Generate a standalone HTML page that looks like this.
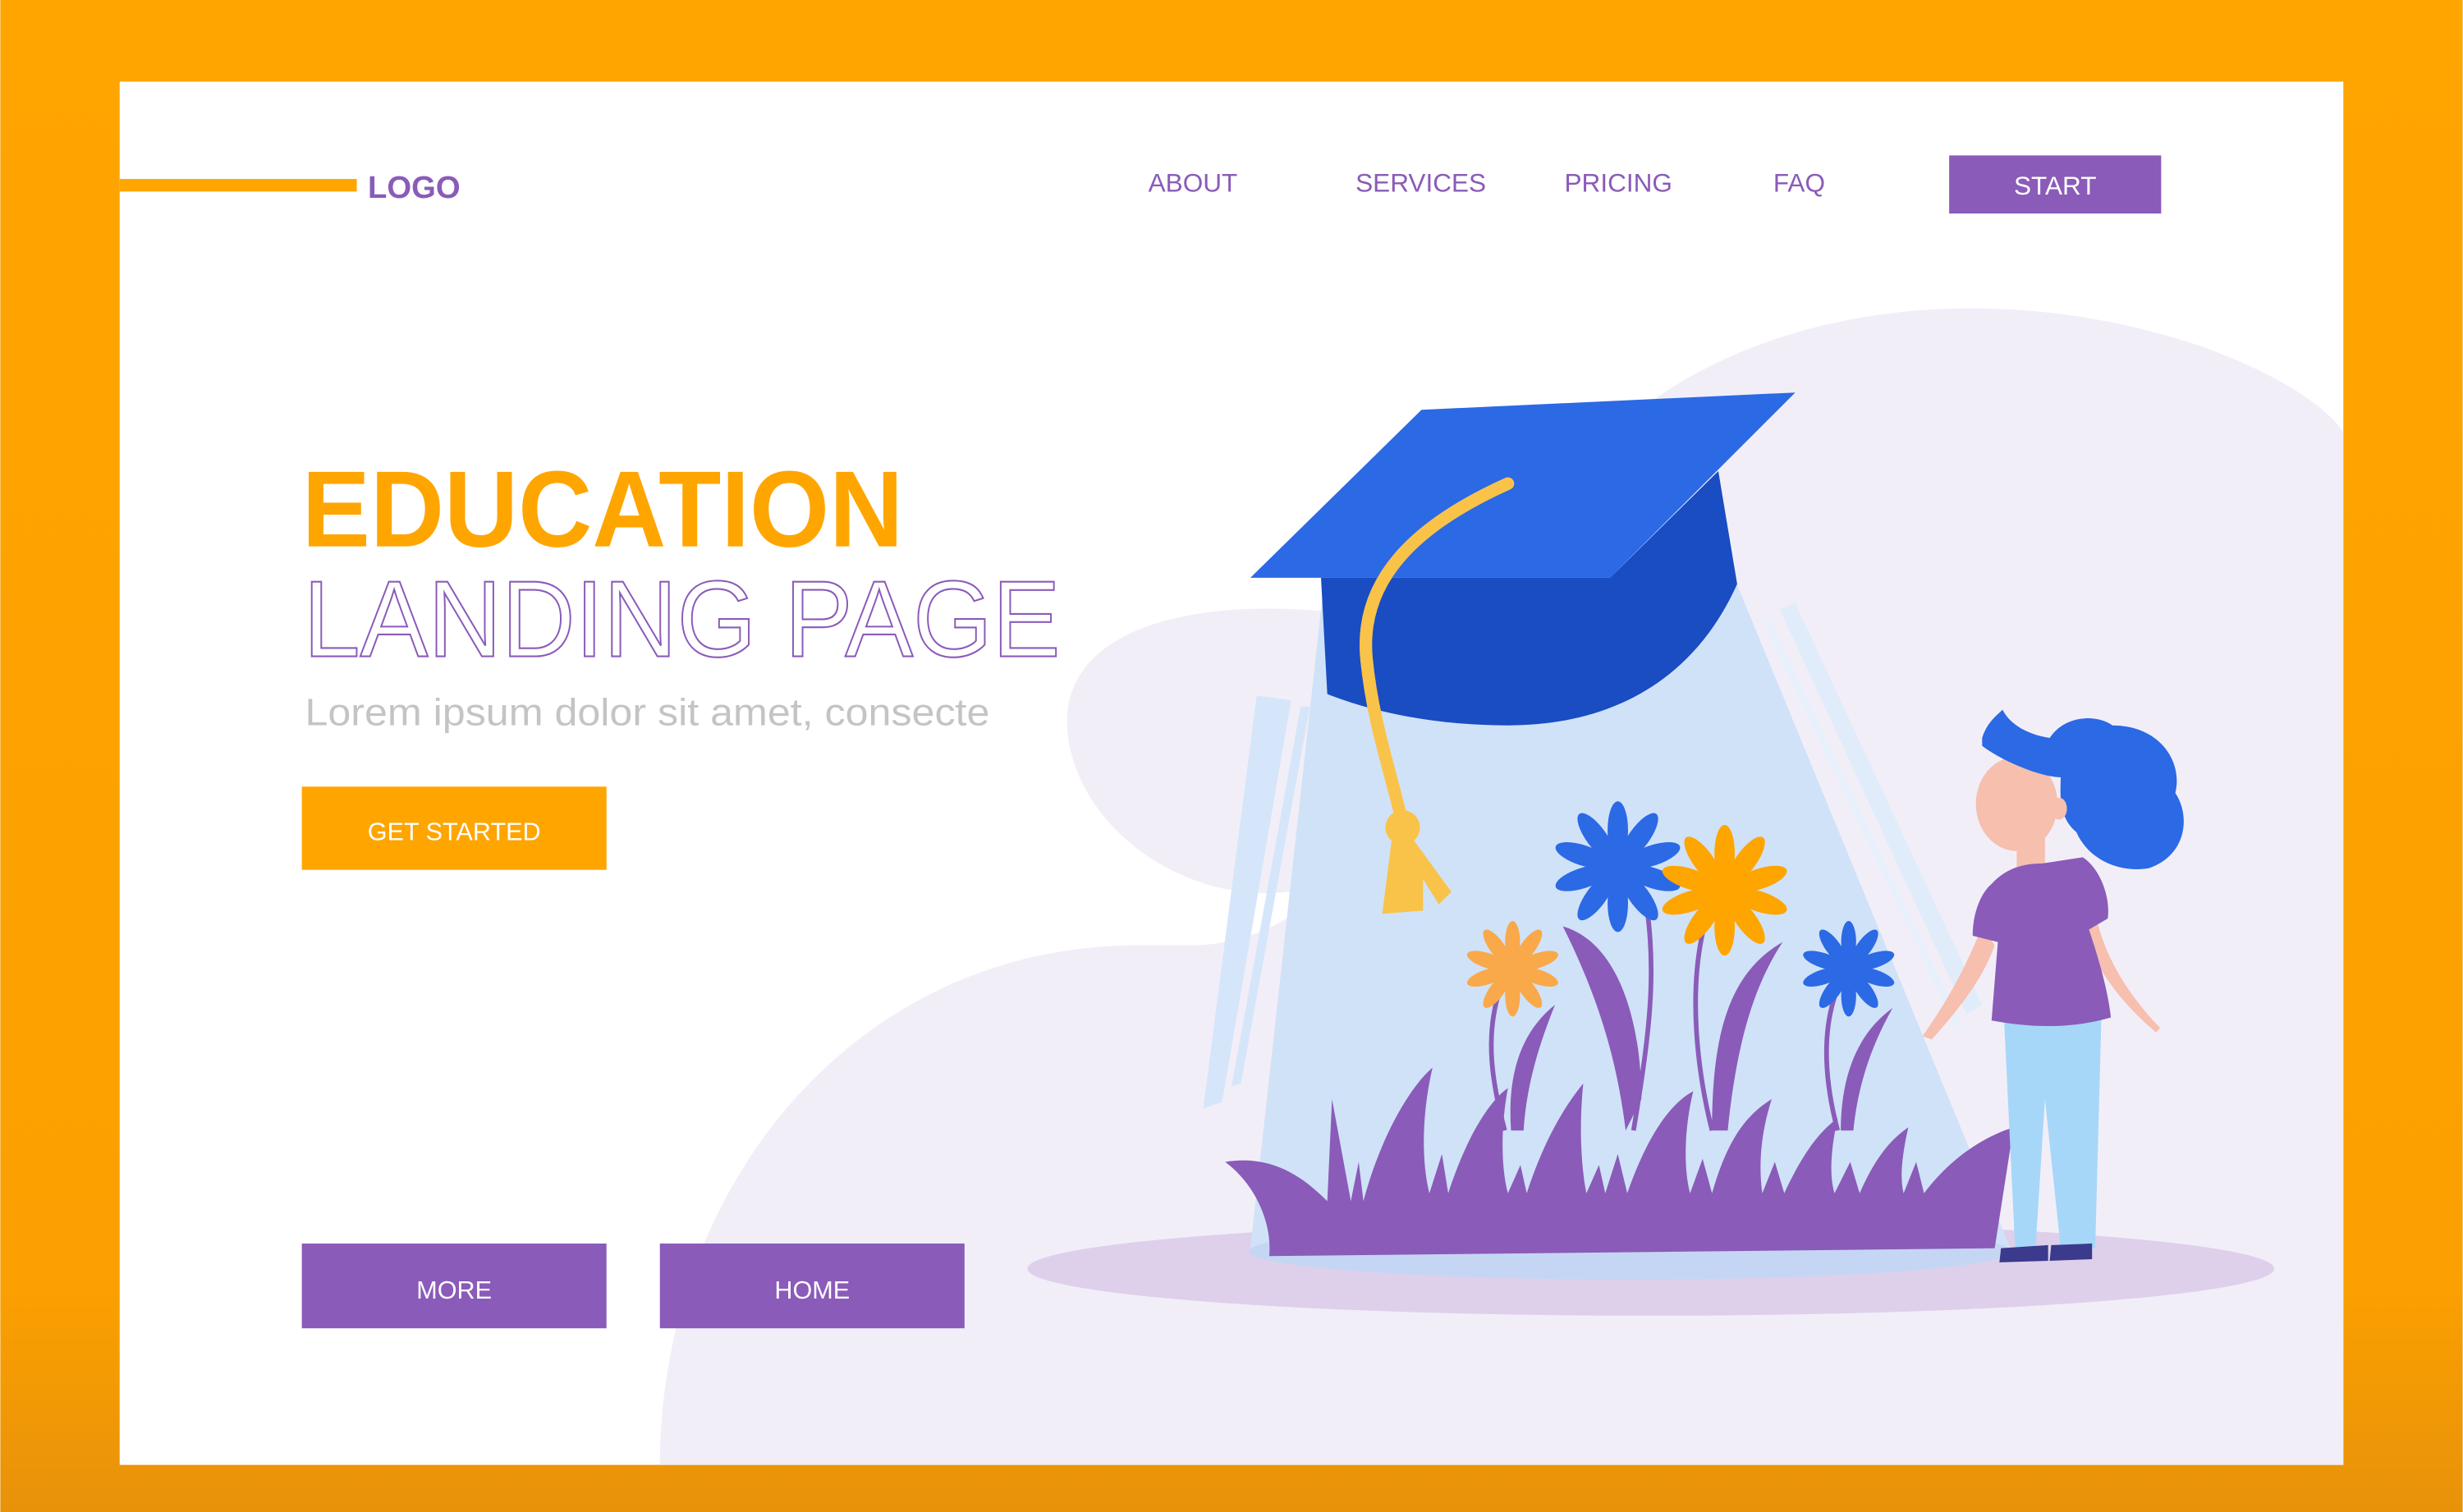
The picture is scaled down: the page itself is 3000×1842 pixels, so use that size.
<!DOCTYPE html>
<html><head><meta charset="utf-8"><style>html,body{margin:0;padding:0;width:3000px;height:1842px;overflow:hidden}svg{display:block}</style></head>
<body>
<svg width="3000" height="1842" viewBox="0 0 1568 963" xmlns="http://www.w3.org/2000/svg" font-family="Liberation Sans, sans-serif">
<defs>
<linearGradient id="bg" x1="0" y1="0" x2="0" y2="1"><stop offset="0" stop-color="#FFA500"/><stop offset="0.85" stop-color="#FBA000"/><stop offset="1" stop-color="#E8920A"/></linearGradient>
<g id="pet"><ellipse cx="0" cy="-18" rx="5" ry="14"/><ellipse cx="0" cy="-18" rx="5" ry="14" transform="rotate(36)"/><ellipse cx="0" cy="-18" rx="5" ry="14" transform="rotate(72)"/><ellipse cx="0" cy="-18" rx="5" ry="14" transform="rotate(108)"/><ellipse cx="0" cy="-18" rx="5" ry="14" transform="rotate(144)"/><ellipse cx="0" cy="-18" rx="5" ry="14" transform="rotate(180)"/><ellipse cx="0" cy="-18" rx="5" ry="14" transform="rotate(216)"/><ellipse cx="0" cy="-18" rx="5" ry="14" transform="rotate(252)"/><ellipse cx="0" cy="-18" rx="5" ry="14" transform="rotate(288)"/><ellipse cx="0" cy="-18" rx="5" ry="14" transform="rotate(324)"/><circle r="10"/></g>
</defs>
<rect width="1568" height="963" fill="url(#bg)"/>
<rect x="76" y="52" width="1416" height="881" fill="#fff"/>
<path d="M420,933 C420,760 540,605 720,602 L760,602 C880,600 920,430 1000,305 C1080,200 1250,170 1400,220 C1450,238 1480,258 1492,275 L1492,933 Z" fill="#F2EEF8"/>
<path d="M680,470 C670,400 760,380 850,390 L850,560 C780,590 690,540 680,470Z" fill="#F2EEF8"/>
<ellipse cx="1051" cy="808" rx="397" ry="30" fill="#DED0EA"/>
<polygon points="843,370 1105,370 1280,795 796,795" fill="#D0E2F8"/>
<ellipse cx="1038" cy="797" rx="243" ry="18" fill="#C5D6F4"/>
<polygon points="800,443 822,446 778,702 766,706" fill="#D6E6FA"/>
<polygon points="828,450 834,450 790,690 784,692" fill="#D6E6FA"/>
<polygon points="1133,388 1143,384 1262,640 1252,646" fill="#E1ECFA"/>
<polygon points="1122,395 1127,395 1250,655 1245,655" fill="#E8F0FB"/>
<polygon points="905,261 1143,250 1025,368 796,368" fill="#2B69E5"/>
<path d="M841,368 L1025,368 L1094,300 L1106,372 C1080,430 1030,462 960,462 C910,462 870,452 845,442 Z" fill="#1A4CC2"/>
<path d="M960,308 C900,335 865,370 870,420 C874,460 885,490 893,525" stroke="#F9C349" stroke-width="8" fill="none" stroke-linecap="round"/>
<circle cx="893" cy="527" r="11" fill="#F9C349"/>
<polygon points="886,535 900,535 924,568 916,576 906,560 906,580 880,582" fill="#F9C349"/>
<g stroke="#8A5BB9" stroke-width="3" fill="none">
<path d="M1048,575 C1055,620 1050,660 1040,720"/>
<path d="M1085,590 C1075,630 1080,680 1090,720"/>
<path d="M955,630 C945,660 950,690 958,720"/>
<path d="M1168,635 C1160,660 1162,690 1170,720"/>
</g>
<use href="#pet" transform="translate(1030,552) scale(1.3)" fill="#2B69E5"/>
<use href="#pet" transform="translate(1098,567) scale(1.3)" fill="#FFA500"/>
<use href="#pet" transform="translate(963,617) scale(0.95)" fill="#F9A94A"/>
<use href="#pet" transform="translate(1177,617) scale(0.95)" fill="#2B69E5"/>
<g fill="#8A5BB9">
<path d="M995,590 C1030,600 1045,650 1045,700 L1035,720 C1030,680 1020,640 995,590Z"/>
<path d="M1135,600 C1100,620 1090,660 1090,720 L1100,720 C1105,670 1115,630 1135,600Z"/>
<path d="M990,640 C965,660 960,690 962,720 L970,720 C972,690 980,665 990,640Z"/>
<path d="M1205,642 C1180,660 1172,690 1172,720 L1180,720 C1183,690 1192,665 1205,642Z"/>
<path d="M780,740 C810,735 830,750 845,765 L848,700 L860,765 L865,740 L868,765 C880,720 900,690 912,680 C905,710 905,740 910,760 L918,735 L922,760 C935,720 950,700 960,693 C955,720 956,745 960,760 L968,742 L972,760 C985,720 1000,700 1008,690 C1005,720 1007,745 1010,760 L1018,742 L1022,760 L1030,735 L1036,760 C1050,720 1065,702 1078,695 C1072,720 1072,745 1076,760 L1084,738 L1090,760 C1100,725 1112,710 1128,700 C1120,725 1120,745 1122,760 L1130,740 L1136,760 C1150,730 1160,720 1170,712 C1165,735 1165,750 1168,760 L1178,740 L1184,760 C1195,735 1205,725 1215,718 C1210,740 1210,752 1212,760 L1220,740 L1225,760 C1240,740 1260,725 1282,718 L1270,795 L808,800 C810,780 800,755 780,740Z"/>
</g>
<g>
<path d="M1276,650 L1338,645 L1334,795 L1312,795 L1302,700 L1296,795 L1283,795Z" fill="#A6D7F8"/>
<path d="M1274,795 L1304,793 L1304,803 L1273,804Z" fill="#3B3A8C"/>
<path d="M1306,793 L1332,792 L1332,802 L1305,803Z" fill="#3B3A8C"/>
<path d="M1262,590 C1250,620 1238,640 1224,660 L1230,662 C1245,645 1262,625 1270,602Z" fill="#F6BFAE"/>
<path d="M1326,590 C1338,620 1355,640 1374,656 L1370,652 C1352,632 1340,612 1334,590Z" fill="#F6BFAE" stroke="#F6BFAE" stroke-width="4"/>
<rect x="1284" y="520" width="18" height="32" fill="#F6BFAE"/>
<path d="M1268,563 C1278,552 1290,550 1300,550 L1326,546 C1336,552 1344,570 1342,585 L1330,592 C1336,610 1342,630 1344,648 C1320,655 1295,655 1268,650 L1272,600 L1256,596 C1256,580 1262,568 1268,563Z" fill="#8A5BB9"/>
<ellipse cx="1284" cy="512" rx="26" ry="30" fill="#F6BFAE"/>
<path d="M1262,470 C1265,460 1272,455 1275,452 C1280,462 1292,468 1305,470 C1315,455 1335,455 1345,462 C1375,462 1390,485 1385,505 C1395,520 1392,545 1368,553 C1350,556 1330,548 1322,530 C1310,520 1312,505 1312,495 C1300,495 1275,485 1262,475Z" fill="#2B69E5"/>
<ellipse cx="1311" cy="515" rx="5" ry="7" fill="#F6BFAE"/>
</g>
<rect x="76" y="114" width="151" height="8" fill="#FFA500"/>
<text x="234" y="126" font-size="20" font-weight="bold" fill="#8A5BB9">LOGO</text>
<g font-size="16.5" fill="#8A5BB9">
<text x="731" y="122">ABOUT</text>
<text x="863" y="122">SERVICES</text>
<text x="996" y="122">PRICING</text>
<text x="1129" y="122">FAQ</text>
</g>
<rect x="1241" y="99" width="135" height="37" fill="#8A5BB9"/>
<text x="1308.5" y="124" font-size="16.5" fill="#fff" text-anchor="middle">START</text>
<text x="192" y="348" font-size="69" font-weight="bold" fill="#FFA500" textLength="383" lengthAdjust="spacingAndGlyphs">EDUCATION</text>
<text x="193" y="418" font-size="69" fill="none" stroke="#8A5BB9" stroke-width="1.1" textLength="482" lengthAdjust="spacingAndGlyphs">LANDING PAGE</text>
<text x="194" y="462" font-size="24" fill="#C4C4C4" textLength="436" lengthAdjust="spacingAndGlyphs">Lorem ipsum dolor sit amet, consecte</text>
<rect x="192" y="501" width="194" height="53" fill="#FFA500"/>
<text x="289" y="535" font-size="16" fill="#fff" text-anchor="middle">GET STARTED</text>
<rect x="192" y="792" width="194" height="54" fill="#8A5BB9"/>
<text x="289" y="827" font-size="16" fill="#fff" text-anchor="middle">MORE</text>
<rect x="420" y="792" width="194" height="54" fill="#8A5BB9"/>
<text x="517" y="827" font-size="16" fill="#fff" text-anchor="middle">HOME</text>
</svg>
</body></html>
